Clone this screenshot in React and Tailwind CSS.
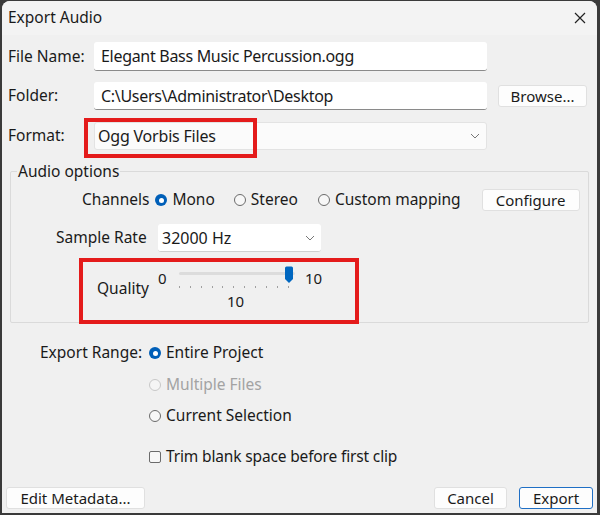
import React from "react";

const font = { fontFamily: '"Segoe UI", "Noto Sans", "Open Sans", sans-serif' };

function Radio({ checked, disabled }) {
  if (checked) {
    return (
      <span className="inline-flex w-[12px] h-[12px] rounded-full bg-[#005fb8] items-center justify-center shrink-0">
        <span className="w-[5px] h-[5px] rounded-full bg-white" />
      </span>
    );
  }
  return (
    <span
      className={
        "inline-block w-[12px] h-[12px] rounded-full border shrink-0 " +
        (disabled ? "border-[#c8c8c8] bg-[#f5f5f5]" : "border-[#6b6b6b] bg-[#f7f7f7]")
      }
    />
  );
}

function Chevron() {
  return (
    <svg width="10" height="6" viewBox="0 0 10 6" className="shrink-0">
      <path d="M1 1 L5 5 L9 1" fill="none" stroke="#777" strokeWidth="1" />
    </svg>
  );
}

function Button({ children, className = "", primary }) {
  return (
    <div
      className={
        "flex items-center justify-center h-[22px] bg-[#fdfdfd] rounded-[3px] text-[15px] text-[#1a1a1a] border " +
        (primary ? "border-[#1f6fc5] " : "border-[#e0e0e0] ") +
        className
      }
    >
      {children}
    </div>
  );
}

export default function App() {
  const ticks = Array.from({ length: 11 });
  return (
    <div className="w-[600px] h-[515px] bg-[#3a3a3a] overflow-hidden" style={font}>
      <div className="relative ml-[2px] mr-[3px] mt-[1px] h-[512px] bg-[#f0f0f0] rounded-t-[8px] flex flex-col text-[#1a1a1a]">
        {/* title bar */}
        <div className="h-[34px] flex items-center justify-between pl-[6px] pr-[11px] bg-[#f3f3f3] rounded-t-[8px]">
          <span className="text-[15.5px] leading-none">Export Audio</span>
          <svg width="12" height="12" viewBox="0 0 12 12">
            <path d="M1 1 L11 11 M11 1 L1 11" stroke="#222" strokeWidth="1.2" />
          </svg>
        </div>

        {/* form rows */}
        <div className="flex flex-col pl-[6px] mt-[7px]">
          <div className="flex items-center h-[29px]">
            <span className="w-[86px] text-[15.5px]">File Name:</span>
            <div className="w-[393px] h-[29px] bg-white border-b border-[#8a8a8a] rounded-[3px] flex items-center pl-[7px] text-[16px] tracking-[-0.3px]">
              Elegant Bass Music Percussion.ogg
            </div>
          </div>
          <div className="flex items-center h-[28px] mt-[11px]">
            <span className="w-[86px] text-[15.5px]">Folder:</span>
            <div className="w-[393px] h-[28px] bg-white border-b border-[#8a8a8a] rounded-[3px] flex items-center pl-[7px] text-[16px] tracking-[-0.3px]">
              C:\Users\Administrator\Desktop
            </div>
            <Button className="ml-[11px] w-[89px]">Browse...</Button>
          </div>
          <div className="flex items-center h-[28px] mt-[12px]">
            <span className="w-[86px] text-[15.5px]">Format:</span>
            <div className="w-[393px] h-[28px] bg-[#fbfbfb] border border-[#e3e3e3] rounded-[3px] flex items-center justify-between pl-[3px] pr-[6px] text-[16px] tracking-[-0.2px]">
              <span>Ogg Vorbis Files</span>
              <Chevron />
            </div>
          </div>
        </div>

        {/* audio options group */}
        <div className="relative mt-[13px] mx-[8px] h-[160px]">
          <div className="absolute left-0 right-0 top-[8px] bottom-0 border border-[#dadada] rounded-[2px]" />
          <div className="relative flex flex-col">
            <div className="flex">
              <span className="ml-[7px] px-[1px] bg-[#f0f0f0] text-[15.5px] leading-[17px]">Audio options</span>
            </div>
            <div className="flex items-center h-[22px] mt-[9px] text-[15.5px]">
              <span className="ml-[72px] mr-[6px]">Channels</span>
              <Radio checked />
              <span className="ml-[5px]">Mono</span>
              <span className="ml-[19px]" />
              <Radio />
              <span className="ml-[5px]">Stereo</span>
              <span className="ml-[20px]" />
              <Radio />
              <span className="ml-[5px]">Custom mapping</span>
              <Button className="ml-[21px] w-[98px]">Configure</Button>
            </div>
            <div className="flex items-center h-[28px] mt-[13px] text-[15.5px]">
              <span className="ml-[46px] w-[102px]">Sample Rate</span>
              <div className="w-[163px] h-[28px] bg-white border-b border-[#d0d0d0] rounded-[3px] flex items-center justify-between pl-[4px] pr-[6px] text-[16px]">
                <span>32000 Hz</span>
                <Chevron />
              </div>
            </div>
            {/* quality */}
            <div className="flex items-start mt-[6px] h-[56px]">
              <span className="ml-[87px] mt-[19px] text-[15.5px]">Quality</span>
              <div className="ml-[9px] mt-[8px] flex flex-col">
                <div className="flex items-start">
                  <span className="text-[15px] leading-[16px] mt-[4px] w-[21px]">0</span>
                  <div className="relative w-[116px] h-[32px]">
                    <div className="absolute left-0 right-0 top-[6px] h-[3px] bg-[#dcdcdc] rounded" />
                    <div className="absolute left-0 w-[110px] top-[20px] flex justify-between">
                      {ticks.map((_, i) => (
                        <span key={i} className="w-[1px] h-[2px] bg-[#a0a0a0]" />
                      ))}
                    </div>
                    <svg className="absolute left-[105px] top-0" width="10" height="18" viewBox="0 0 10 18">
                      <path d="M1 2 Q1 0.5 2.5 0.5 L7.5 0.5 Q9 0.5 9 2 L9 13 L5 17 L1 13 Z" fill="#0067c0" />
                    </svg>
                  </div>
                  <span className="ml-[10px] text-[15px] leading-[16px] mt-[4px]">10</span>
                </div>
                <span className="ml-[69px] -mt-[5px] text-[15px] leading-[16px]">10</span>
              </div>
            </div>
          </div>
        </div>

        {/* export range */}
        <div className="flex flex-col mt-[19px] text-[15.5px]">
          <div className="flex items-center h-[22px]">
            <span className="ml-[38px] w-[109px]">Export Range:</span>
            <Radio checked />
            <span className="ml-[5px]">Entire Project</span>
          </div>
          <div className="flex items-center h-[22px] mt-[10px] text-[#a3a3a3]">
            <span className="ml-[147px]" />
            <Radio disabled />
            <span className="ml-[5px]">Multiple Files</span>
          </div>
          <div className="flex items-center h-[22px] mt-[9px]">
            <span className="ml-[147px]" />
            <Radio />
            <span className="ml-[5px]">Current Selection</span>
          </div>
          <div className="flex items-center h-[22px] mt-[19px]">
            <span className="ml-[147px]" />
            <span className="inline-block w-[12px] h-[12px] border border-[#6b6b6b] rounded-[2px] bg-[#f7f7f7]" />
            <span className="ml-[5px] tracking-[-0.15px]">Trim blank space before first clip</span>
          </div>
        </div>

        {/* bottom buttons */}
        <div className="flex items-center mt-[19px] px-[4px]">
          <Button className="w-[139px]">Edit Metadata...</Button>
          <div className="flex-1" />
          <Button className="w-[73px]">Cancel</Button>
          <Button primary className="ml-[12px] w-[74px]">Export</Button>
        </div>

        {/* red annotation boxes */}
        <div className="absolute left-[82px] top-[117px] w-[173px] h-[40px] border-[4px] border-[#e41b1b]" />
        <div className="absolute left-[77px] top-[257px] w-[280px] h-[66px] border-[4px] border-[#e41b1b]" />
      </div>
    </div>
  );
}
